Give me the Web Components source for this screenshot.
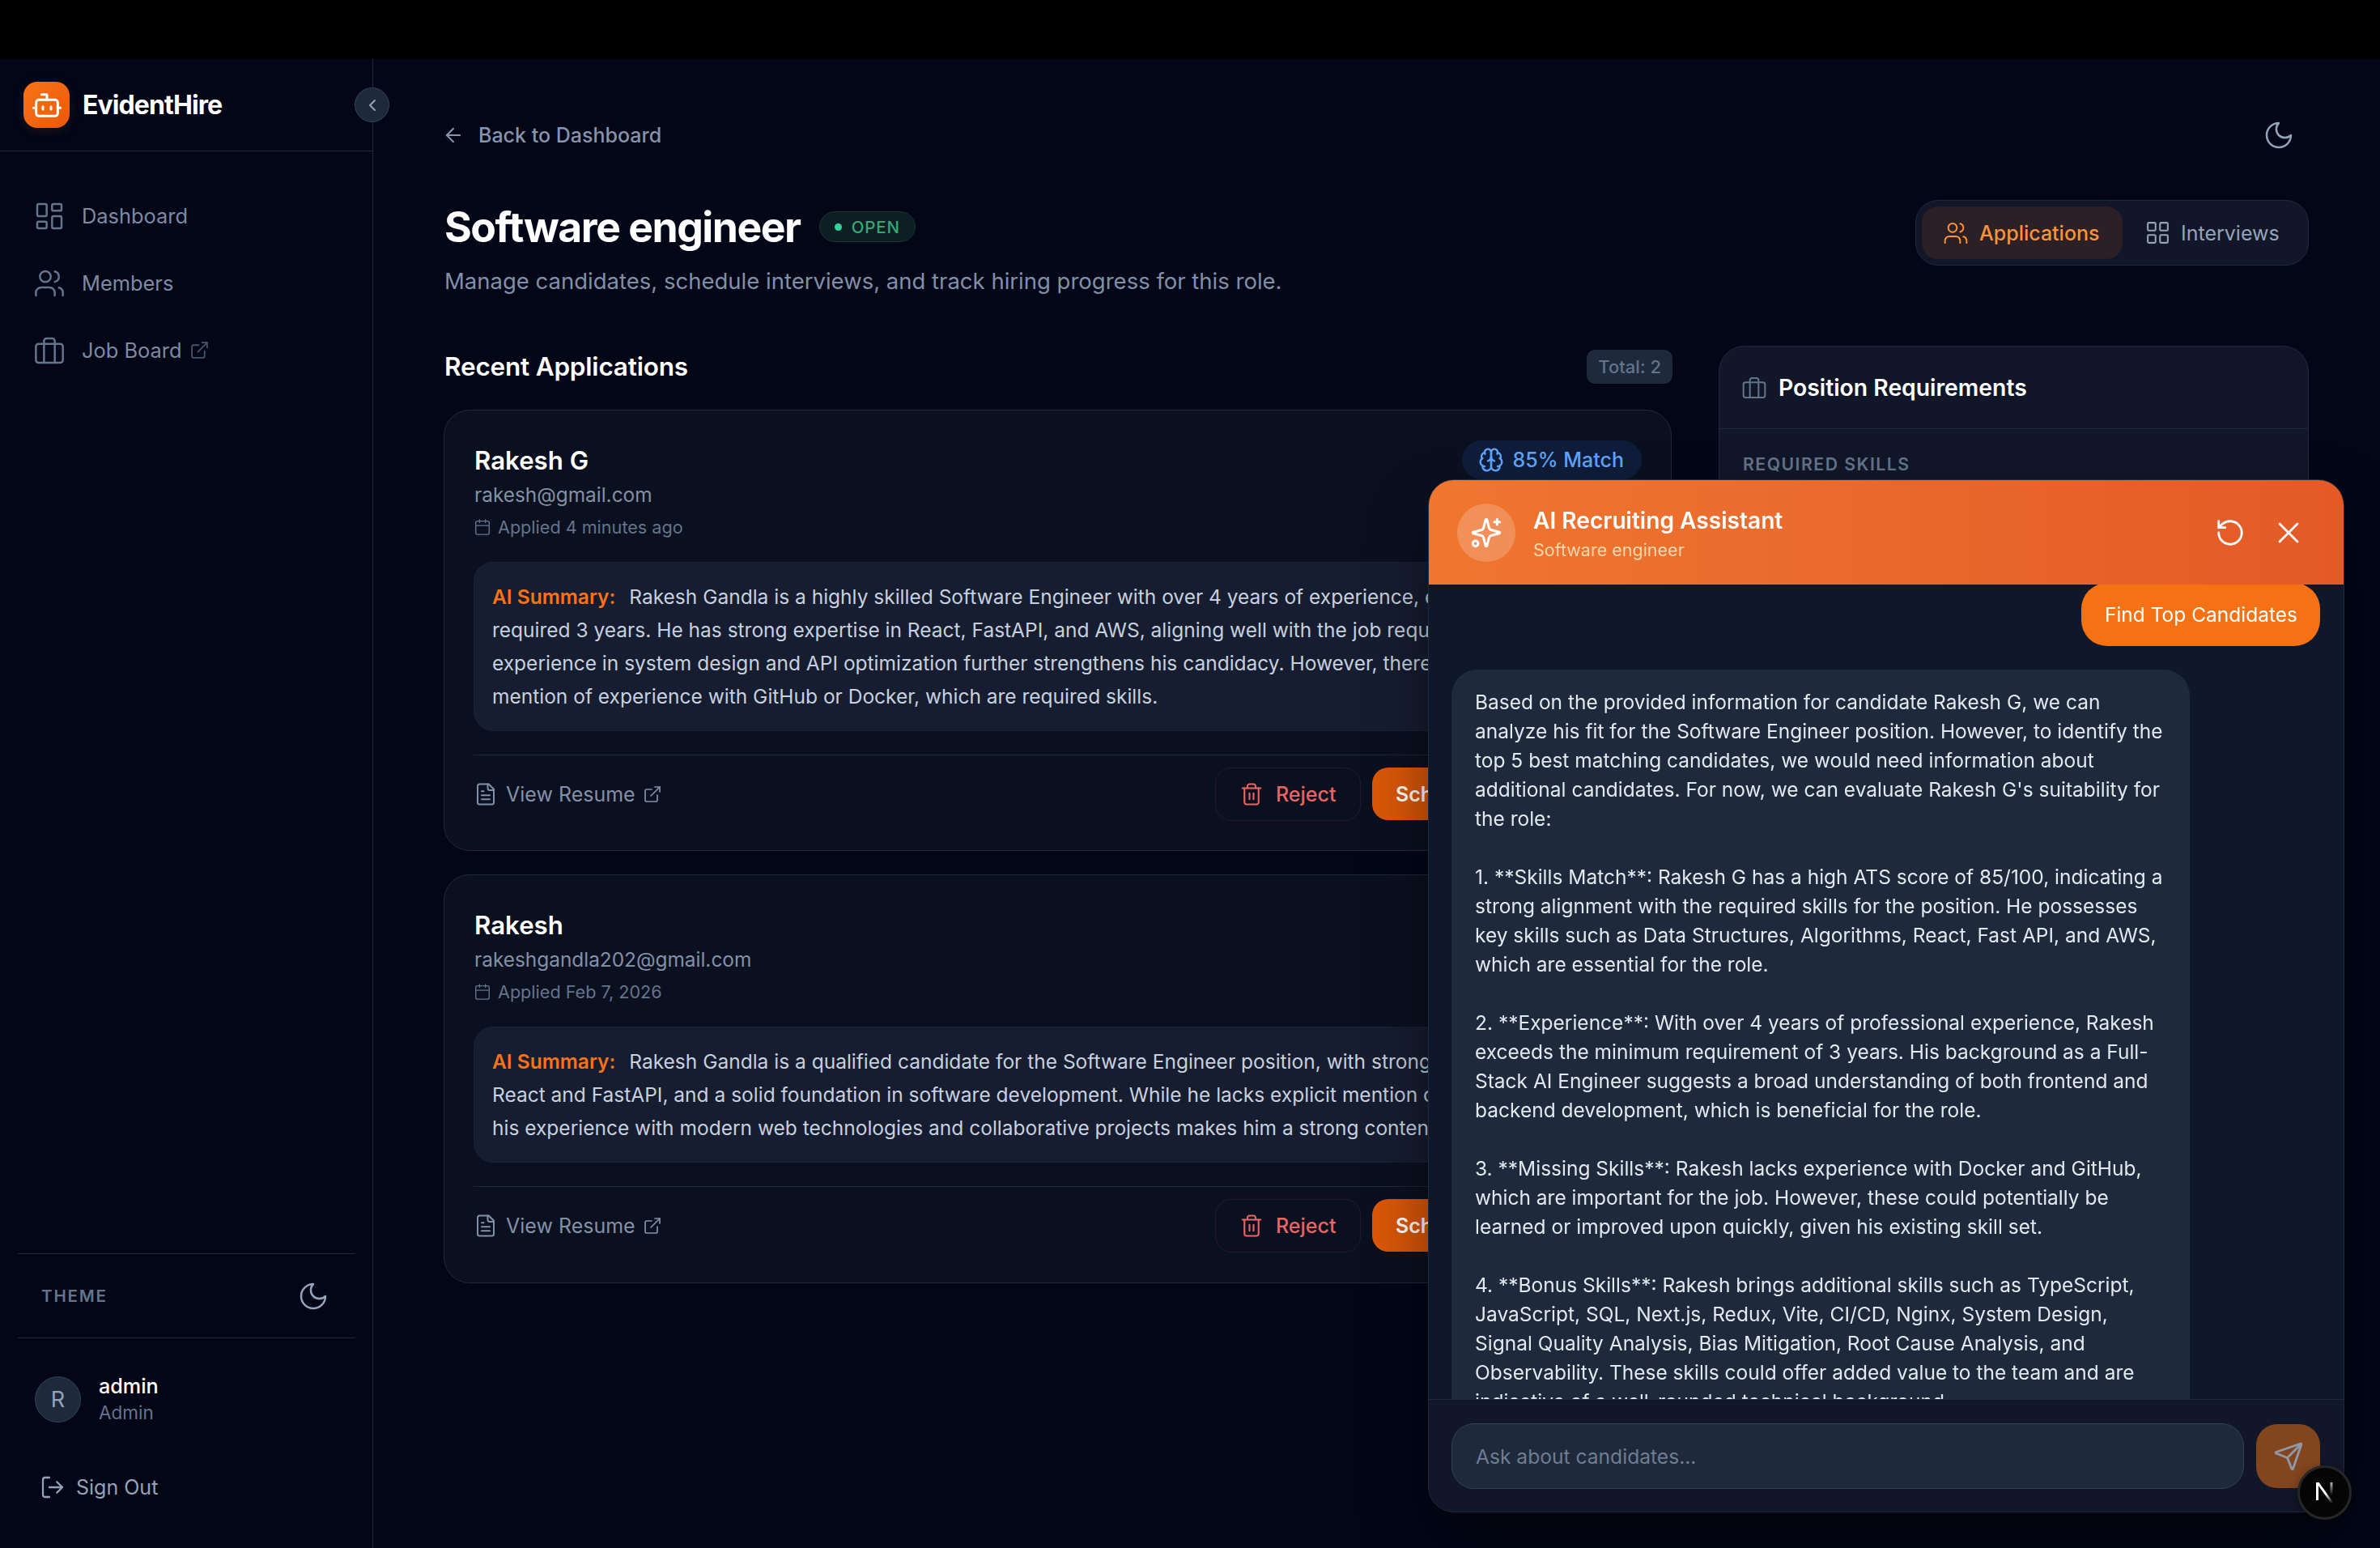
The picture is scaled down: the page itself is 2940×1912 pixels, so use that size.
<!DOCTYPE html>
<html lang="en"><head><meta charset="utf-8"><title>EvidentHire</title>
<style>
html,body{margin:0;padding:0;background:#000;overflow:hidden}
body{width:2940px;height:1912px;font-family:Inter,"Noto Sans",sans-serif;-webkit-font-smoothing:antialiased}
</style></head><body>
<app-shell></app-shell>
<script>
const P={
bot:'<path d="M12 8V4H8"/><rect x="4" y="8" width="16" height="12" rx="2"/><path d="M2 14h2M20 14h2M15 13v2M9 13v2"/>',
dash:'<rect x="3" y="3" width="7" height="9" rx="1"/><rect x="14" y="3" width="7" height="5" rx="1"/><rect x="14" y="12" width="7" height="9" rx="1"/><rect x="3" y="16" width="7" height="5" rx="1"/>',
users:'<path d="M16 21v-2a4 4 0 0 0-4-4H6a4 4 0 0 0-4 4v2"/><circle cx="9" cy="7" r="4"/><path d="M22 21v-2a4 4 0 0 0-3-3.87"/><path d="M16 3.13a4 4 0 0 1 0 7.75"/>',
brief:'<rect x="2" y="7" width="20" height="14" rx="2"/><path d="M16 21V5a2 2 0 0 0-2-2h-4a2 2 0 0 0-2 2v16"/>',
ext:'<path d="M15 3h6v6"/><path d="M10 14 21 3"/><path d="M18 13v6a2 2 0 0 1-2 2H5a2 2 0 0 1-2-2V8a2 2 0 0 1 2-2h6"/>',
chev:'<path d="m15 18-6-6 6-6"/>',
moon:'<path d="M12 3a6 6 0 0 0 9 9 9 9 0 1 1-9-9Z"/>',
out:'<path d="M9 21H5a2 2 0 0 1-2-2V5a2 2 0 0 1 2-2h4"/><path d="m16 17 5-5-5-5"/><path d="M21 12H9"/>',
back:'<path d="m12 19-7-7 7-7"/><path d="M19 12H5"/>',
grid:'<rect x="3" y="3" width="7" height="7" rx="1"/><rect x="14" y="3" width="7" height="7" rx="1"/><rect x="14" y="14" width="7" height="7" rx="1"/><rect x="3" y="14" width="7" height="7" rx="1"/>',
cal:'<rect x="3" y="4" width="18" height="18" rx="2"/><path d="M16 2v4M8 2v4M3 10h18"/>',
file:'<path d="M15 2H6a2 2 0 0 0-2 2v16a2 2 0 0 0 2 2h12a2 2 0 0 0 2-2V7Z"/><path d="M14 2v4a2 2 0 0 0 2 2h4"/><path d="M10 9H8M16 13H8M16 17H8"/>',
trash:'<path d="M3 6h18"/><path d="M19 6v14c0 1-1 2-2 2H7c-1 0-2-1-2-2V6"/><path d="M8 6V4c0-1 1-2 2-2h4c1 0 2 1 2 2v2"/><path d="M10 11v6M14 11v6"/>',
brain:'<path d="M12 5a3 3 0 1 0-5.997.125 4 4 0 0 0-2.526 5.77 4 4 0 0 0 .556 6.588A4 4 0 1 0 12 18Z"/><path d="M12 5a3 3 0 1 1 5.997.125 4 4 0 0 1 2.526 5.77 4 4 0 0 1-.556 6.588A4 4 0 1 1 12 18Z"/><path d="M15 13a4.5 4.5 0 0 1-3-4 4.5 4.5 0 0 1-3 4"/><path d="M17.599 6.5a3 3 0 0 0 .399-1.375"/><path d="M6.003 5.125A3 3 0 0 0 6.401 6.5"/><path d="M3.477 10.896a4 4 0 0 1 .585-.396"/><path d="M19.938 10.5a4 4 0 0 1 .585.396"/><path d="M6 18a4 4 0 0 1-1.967-.516"/><path d="M19.967 17.484A4 4 0 0 1 18 18"/>',
spark:'<path d="M9.937 15.5A2 2 0 0 0 8.5 14.063l-6.135-1.582a.5.5 0 0 1 0-.962L8.5 9.936A2 2 0 0 0 9.937 8.5l1.582-6.135a.5.5 0 0 1 .963 0L14.063 8.5A2 2 0 0 0 15.5 9.937l6.135 1.581a.5.5 0 0 1 0 .964L15.5 14.063a2 2 0 0 0-1.437 1.437l-1.582 6.135a.5.5 0 0 1-.963 0z"/><path d="M20 2v4M22 4h-4"/><circle cx="4" cy="20" r="2"/>',
reset:'<path d="M3 12a9 9 0 1 0 9-9 9.75 9.75 0 0 0-6.74 2.74L3 8"/><path d="M3 3v5h5"/>',
x:'<path d="M18 6 6 18"/><path d="m6 6 12 12"/>',
send:'<path d="M14.536 21.686a.5.5 0 0 0 .937-.024l6.5-19a.496.496 0 0 0-.635-.635l-19 6.5a.5.5 0 0 0-.024.937l7.93 3.18a2 2 0 0 1 1.112 1.11z"/><path d="m21.854 2.147-10.94 10.939"/>'
};
const ic=(n,s,c='currentColor',w=1.5)=>`<svg xmlns="http://www.w3.org/2000/svg" width="${s}" height="${s}" viewBox="0 0 24 24" fill="none" stroke="${c}" stroke-width="${w}" stroke-linecap="round" stroke-linejoin="round" style="display:block;flex:none">${P[n]}</svg>`;
class Base extends HTMLElement{
  connectedCallback(){ if(!this.shadowRoot){this.attachShadow({mode:'open'}).innerHTML=this.render();} }
  a(n,d=''){return this.getAttribute(n)??d}
}
const def=(n,r)=>customElements.define(n,class extends Base{render(){return r.call(this)}});

def('nav-item',function(){return `<style>:host{display:flex;align-items:center;height:83px;padding-left:41px;gap:20px;color:#7d8aa3;font-size:25.4px}
.i{color:#64748b}.e{color:#475569;margin-left:-10px}</style><span class="i">${ic(this.a('icon'),40)}</span><span><slot></slot></span>${this.hasAttribute('external')?`<span class="e">${ic('ext',25,'currentColor',1.7)}</span>`:''}`});

def('side-bar',function(){return `<style>
:host{display:flex;flex-direction:column;width:461px;flex:none;box-sizing:border-box;border-right:1px solid #1e293b;position:relative;height:100%;background:#020617}
header{height:114px;box-sizing:border-box;border-bottom:1px solid #1e293b;display:flex;align-items:center;padding-left:29px;gap:16px}
.logo{width:57px;height:57px;border-radius:17px;background:linear-gradient(135deg,#f97316,#ea580c);display:grid;place-items:center;color:#fff;box-shadow:0 4px 14px rgba(249,115,22,.12)}
.brand{font-size:32px;font-weight:700;color:#fff;letter-spacing:-.9px}
.col{position:absolute;left:438px;top:35px;width:43px;height:43px;box-sizing:border-box;border-radius:50%;background:#1e293b;border:1px solid #334155;display:grid;place-items:center;color:#94a3b8}
nav{padding-top:38px;display:flex;flex-direction:column}
.foot{margin-top:auto;padding:0 22px}
.theme{height:105px;box-sizing:border-box;border-top:1px solid #1e293b;border-bottom:1px solid #1e293b;display:flex;align-items:center;justify-content:space-between;padding:0 31px 0 29px;color:#94a3b8}
.theme span{font-size:20.6px;font-weight:600;letter-spacing:1.8px;color:#64748b}
.user{display:flex;align-items:center;gap:22px;padding:0 21px;height:150px;box-sizing:border-box}
.av{width:57px;height:57px;box-sizing:border-box;border-radius:50%;background:#1e293b;border:1px solid #334155;color:#94a3b8;font-size:27px;display:grid;place-items:center}
.n{font-size:25.2px;font-weight:500;color:#fff;line-height:32px}.r{font-size:22.5px;color:#64748b;line-height:30px;margin-top:2px}
.out{display:flex;align-items:center;gap:13px;color:#94a3b8;font-size:25px;padding:0 0 0 27px;height:62px;margin:3px 0 44px}
</style>
<header><div class="logo">${ic('bot',40,'#fff',1.8)}</div><div class="brand">EvidentHire</div></header>
<div class="col">${ic('chev',24,'currentColor',2)}</div>
<nav><nav-item icon="dash">Dashboard</nav-item><nav-item icon="users">Members</nav-item><nav-item icon="brief" external>Job Board</nav-item></nav>
<div class="foot"><div class="theme"><span>THEME</span>${ic('moon',40)}</div>
<div class="user"><div class="av">R</div><div><div class="n">admin</div><div class="r">Admin</div></div></div>
<div class="out">${ic('out',32,'currentColor',1.7)}<span>Sign Out</span></div></div>`});

def('tab-switch',function(){return `<style>
:host{display:flex;box-sizing:border-box;width:486px;height:81px;align-items:center;padding:0 7px;background:#111729;border:1px solid #1e293b;border-radius:28px}
div{display:flex;align-items:center;font-size:25px;height:65px;box-sizing:border-box;border-radius:20px}
.a{background:#2a2026;color:#fb923c;width:248px;padding-left:26px;gap:13px;font-weight:500}
.b{color:#94a3b8;padding-left:27px;gap:12px;font-weight:400}
</style><div class="a">${ic('users',32)}<span>Applications</span></div><div class="b">${ic('grid',33)}<span>Interviews</span></div>`});

def('app-card',function(){return `<style>
:host{display:block;box-sizing:border-box;background:#0b1020;border:1px solid #1e293b;border-radius:32px;padding:0 36px;position:relative;color:#94a3b8}
.top{display:flex;justify-content:space-between;align-items:flex-start;height:187px;box-sizing:border-box;padding-top:39px}
.nm{font-size:31.2px;font-weight:600;color:#fff;line-height:46px;padding-left:1px}
.em{font-size:24.4px;line-height:36px;margin-top:1px;color:#8290a6;padding-left:1px}
.ap{display:flex;align-items:center;gap:8px;font-size:21.6px;color:#64748b;line-height:30px;margin-top:7px}
.score{display:flex;align-items:center;gap:11px;height:48px;padding:0 22px 0 20px;border-radius:24px;background:#0f1d3a;color:#60a5fa;font-size:25px;font-weight:500;margin-top:-2px}
.sum{box-sizing:border-box;background:#161d30;border:1px solid #1a2234;border-radius:24px;padding:22px 22px 0;height:${this.a('sh','209')}px;font-size:24.5px;line-height:41px;color:#c6d0de;white-space:nowrap;overflow:hidden}
::slotted(b){color:#f97316;font-weight:600;margin-right:17px}
.act{margin-top:29px;border-top:1px solid #1e293b;display:flex;align-items:flex-start;padding-top:15px;box-sizing:border-box}
.res{display:flex;align-items:center;height:66px;gap:9px;font-size:25px;color:#8290a6}
.res svg:first-child{margin-right:1px}
.sp{flex:1}
.rej{display:flex;align-items:center;gap:15px;width:180px;height:66px;box-sizing:border-box;padding-left:29px;border:1px solid #26182a;border-radius:20px;color:#ea6464;font-size:25px;font-weight:500;margin-right:14px}
.sch{display:flex;align-items:center;width:333px;box-sizing:border-box;height:65px;padding:0 29px;background:#dc5808;border-radius:20px;color:#fff;font-size:25px;font-weight:600;white-space:nowrap}
</style>
<div class="top"><div><div class="nm">${this.a('name')}</div><div class="em">${this.a('email')}</div><div class="ap">${ic('cal',22)}<span>${this.a('applied')}</span></div></div>
<div class="score">${ic('brain',32,'currentColor',1.8)}<span>85% Match</span></div></div>
<div class="sum"><slot></slot></div>
<div class="act"><div class="res">${ic('file',30,'currentColor',1.6)}<span>View Resume</span>${ic('ext',24,'currentColor',1.7)}</div><div class="sp"></div>
<div class="rej">${ic('trash',30,'currentColor',1.7)}<span>Reject</span></div><div class="sch">Schedule Interview</div></div>`});

def('req-panel',function(){return `<style>
:host{display:block;box-sizing:border-box;width:729px;height:900px;background:#111729;border:1px solid #1e293b;border-radius:32px}
.h{display:flex;align-items:center;gap:14px;height:102px;box-sizing:border-box;border-bottom:1px solid #1e293b;padding-left:27px;font-size:28.3px;font-weight:600;color:#fff}
.h span{display:block}.i{color:#64748b}
.l{padding:30px 29px;font-size:21.2px;font-weight:600;letter-spacing:1.5px;color:#64748b}
</style><div class="h"><div class="i">${ic('brief',32)}</div><span>Position Requirements</span></div><div class="l">REQUIRED SKILLS</div>`});

def('main-view',function(){return `<style>
:host{display:block;flex:1;min-width:0;box-sizing:border-box;padding:0 88px 0 87px;position:relative;color:#94a3b8}
.top{display:flex;justify-content:space-between;align-items:center;height:62px;margin-top:63px}
.back{display:flex;align-items:center;gap:17px;font-size:25px;font-weight:500;color:#8794ab;margin-left:-2px}
.moon{margin-right:17px;color:#94a3b8}
.hd{display:flex;justify-content:space-between;align-items:flex-start;margin-top:50px;height:127px}
h1{margin:0 0 0 1px;font-size:51.7px;line-height:64px;font-weight:700;letter-spacing:-1.5px;color:#fff}
.tl{display:flex;align-items:center;gap:23px}
.open{display:flex;align-items:center;gap:12px;height:38px;box-sizing:border-box;padding:0 18px 0 18px;border-radius:19px;background:#0d1f24;border:1px solid #14352f;color:#34a871;font-size:20.5px;font-weight:500;letter-spacing:.9px}
.dot{width:9px;height:9px;border-radius:50%;background:#34d399}
.sub{font-size:27.5px;line-height:40px;color:#8190a8;margin:15px 0 0 1px}
.tabs{margin-top:-1px}
.cols{display:grid;grid-template-columns:1517px 729px;gap:58px;margin-top:52px}
.rh{display:flex;justify-content:space-between;align-items:center;height:42px;margin:5px 0 32px}
h2{margin:-2px 0 0 1px;font-size:31.5px;font-weight:600;color:#fff;letter-spacing:-.2px}
.tot{height:42px;box-sizing:border-box;padding:0 14px;display:flex;align-items:center;background:#1e293b;border-radius:10px;font-size:22px;font-weight:500;color:#64748b;margin-right:-1px}
.list{display:flex;flex-direction:column;gap:29px}
</style>
<div class="top"><div class="back">${ic('back',28,'currentColor',1.8)}<span>Back to Dashboard</span></div><div class="moon">${ic('moon',40)}</div></div>
<div class="hd"><div><div class="tl"><h1>Software engineer</h1><div class="open"><i class="dot"></i>OPEN</div></div><div class="sub">Manage candidates, schedule interviews, and track hiring progress for this role.</div></div><div class="tabs"><tab-switch></tab-switch></div></div>
<div class="cols"><div>
<div class="rh"><h2>Recent Applications</h2><div class="tot">Total: 2</div></div>
<div class="list">
<app-card name="Rakesh G" email="rakesh@gmail.com" applied="Applied 4 minutes ago" style="height:545px"><b>AI Summary:</b>Rakesh Gandla is a highly skilled Software Engineer with over 4 years of experience, exceeding the<br>required 3 years. He has strong expertise in React, FastAPI, and AWS, aligning well with the job requirements. His<br>experience in system design and API optimization further strengthens his candidacy. However, there is no<br>mention of experience with GitHub or Docker, which are required skills.</app-card>
<app-card name="Rakesh" email="rakeshgandla202@gmail.com" applied="Applied Feb 7, 2026" sh="168" style="height:505px"><b>AI Summary:</b>Rakesh Gandla is a qualified candidate for the Software Engineer position, with strong skills in<br>React and FastAPI, and a solid foundation in software development. While he lacks explicit mention of some skills,<br>his experience with modern web technologies and collaborative projects makes him a strong contender.</app-card>
</div></div>
<req-panel></req-panel></div>`});

def('chat-panel',function(){return `<style>
:host{position:fixed;left:1764px;top:592px;width:1132px;height:1276px;box-sizing:border-box;background:#0f172a;border:1px solid #1e293b;border-radius:32px;overflow:hidden;display:flex;flex-direction:column;box-shadow:0 40px 80px rgba(0,0,0,.45)}
.h{height:129px;flex:none;box-sizing:border-box;background:linear-gradient(90deg,#f07630,#e35a27);display:flex;align-items:center;padding:0 46px 0 35px;color:#fff;position:relative;z-index:1}
.c{width:72px;height:72px;border-radius:50%;background:rgba(255,255,255,.2);display:grid;place-items:center;margin-right:22px}
.t{font-size:28.1px;font-weight:600;line-height:40px;margin-top:1px}.s{font-size:21.5px;color:#fed7aa;line-height:30px;margin-top:1px}
.sp{flex:1}.r{margin-right:31px}
.m{flex:1;min-height:0;overflow:hidden;padding:0 29px 0 28px;position:relative}
.u{margin:-2px 0 0 auto;width:fit-content;box-sizing:border-box;height:78px;display:flex;align-items:center;padding:0 28px 0 29px;background:#f57214;color:#fff;font-size:24.5px;border-radius:32px}
.ai{margin-top:29px;width:912px;box-sizing:border-box;padding:22px 28px 40px 29px;background:#1e293b;border-radius:32px;color:#e2e8f0;font-size:24.5px;line-height:36px;white-space:nowrap;height:1000px}
.f{height:139px;flex:none;box-sizing:border-box;border-top:1px solid #1e293b;background:#111729;display:flex;gap:15px;padding:29px 29px 0 28px;align-items:flex-start}
.in{width:980px;height:81px;box-sizing:border-box;background:#1e293b;border:1px solid #334155;border-radius:28px;display:flex;align-items:center;padding-left:29px;color:#6f7c91;font-size:24.6px}
.b{width:79px;height:79px;margin-top:1px;background:#82451e;border-radius:26px;display:grid;place-items:center;color:#8f98a6}
</style>
<div class="h"><div class="c">${ic('spark',40,'#fff',1.8)}</div><div><div class="t">AI Recruiting Assistant</div><div class="s">Software engineer</div></div><div class="sp"></div><div class="r">${ic('reset',38,'#fff',1.8)}</div><div>${ic('x',44,'#fff',1.5)}</div></div>
<div class="m"><div class="u">Find Top Candidates</div><div class="ai">Based on the provided information for candidate Rakesh G, we can<br>analyze his fit for the Software Engineer position. However, to identify the<br>top 5 best matching candidates, we would need information about<br>additional candidates. For now, we can evaluate Rakesh G's suitability for<br>the role:<br><br>1. **Skills Match**: Rakesh G has a high ATS score of 85/100, indicating a<br>strong alignment with the required skills for the position. He possesses<br>key skills such as Data Structures, Algorithms, React, Fast API, and AWS,<br>which are essential for the role.<br><br>2. **Experience**: With over 4 years of professional experience, Rakesh<br>exceeds the minimum requirement of 3 years. His background as a Full-<br>Stack AI Engineer suggests a broad understanding of both frontend and<br>backend development, which is beneficial for the role.<br><br>3. **Missing Skills**: Rakesh lacks experience with Docker and GitHub,<br>which are important for the job. However, these could potentially be<br>learned or improved upon quickly, given his existing skill set.<br><br>4. **Bonus Skills**: Rakesh brings additional skills such as TypeScript,<br>JavaScript, SQL, Next.js, Redux, Vite, CI/CD, Nginx, System Design,<br>Signal Quality Analysis, Bias Mitigation, Root Cause Analysis, and<br>Observability. These skills could offer added value to the team and are<br>indicative of a well-rounded technical background.</div></div>
<div class="f"><div class="in">Ask about candidates...</div><div class="b">${ic('send',38,'currentColor',1.8)}</div></div>`});

def('dev-badge',function(){return `<style>
:host{position:fixed;left:2838px;top:1810px;width:67px;height:67px;box-sizing:border-box;border-radius:50%;background:#050505;border:3px solid #262626;display:grid;place-items:center;box-shadow:0 4px 12px rgba(0,0,0,.4)}
</style><svg width="22" height="27" viewBox="0 0 22 27"><defs><linearGradient id="g" gradientUnits="userSpaceOnUse" x1="2" y1="0" x2="21" y2="26"><stop offset=".55" stop-color="#fff"/><stop offset="1" stop-color="#fff" stop-opacity="0"/></linearGradient><linearGradient id="h" gradientUnits="userSpaceOnUse" x1="0" y1="0" x2="0" y2="17"><stop offset="0" stop-color="#fff" stop-opacity=".75"/><stop offset="1" stop-color="#fff" stop-opacity="0"/></linearGradient></defs><rect x="0" y="1" width="3" height="22" fill="#fff"/><polygon points="0,1 3.6,1 21.5,26 18,26" fill="url(#g)"/><rect x="17.5" y="1" width="3" height="17" fill="url(#h)"/></svg>`});

def('app-shell',function(){return `<style>
:host{display:flex;flex-direction:column;width:2940px;height:1912px;background:#000;color:#fff}
.bar{height:73px;flex:none;background:#000}
.row{flex:1;min-height:0;display:flex;background:#020617;overflow:hidden}
</style><div class="bar"></div><div class="row"><side-bar></side-bar><main-view></main-view></div><chat-panel></chat-panel><dev-badge></dev-badge>`});
</script></body></html>
